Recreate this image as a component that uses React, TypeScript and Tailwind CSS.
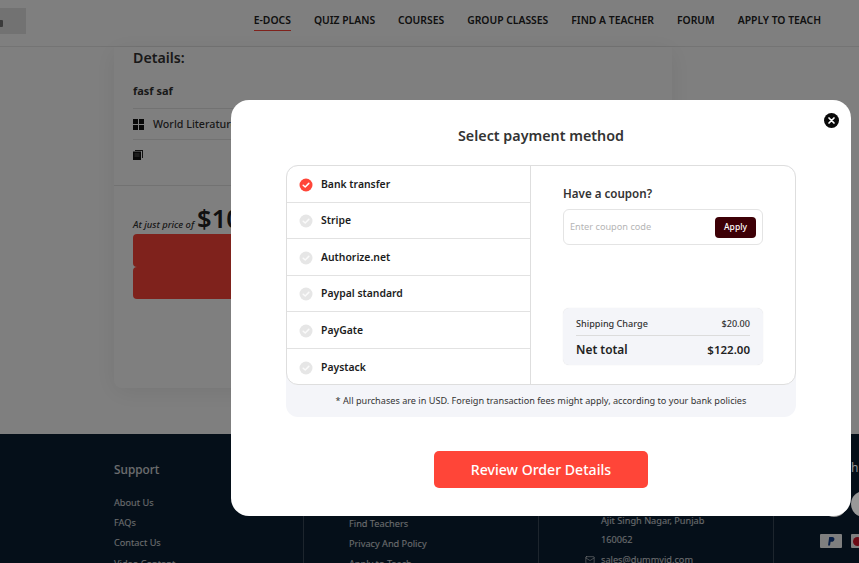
import React from 'react';
import { Mail } from 'lucide-react';

const navItems = ['E-DOCS', 'QUIZ PLANS', 'COURSES', 'GROUP CLASSES', 'FIND A TEACHER', 'FORUM', 'APPLY TO TEACH'];
const methods = ['Bank transfer', 'Stripe', 'Authorize.net', 'Paypal standard', 'PayGate', 'Paystack'];

const CheckDot = ({ active }: { active: boolean }) => (
  <svg width="14" height="14" viewBox="0 0 14 14" className="shrink-0">
    <circle cx="7" cy="7" r="6.5" fill={active ? '#ff4538' : '#e6e6e6'} />
    <path d="M4.2 7.2 6.2 9l3.6-3.6" fill="none" stroke={active ? '#ffffff' : '#fafafa'} strokeWidth="1.5" strokeLinecap="round" strokeLinejoin="round" />
  </svg>
);

const Header = () => (
  <header className="flex h-[47px] items-start justify-between border-b border-[#e8e8e8] bg-white pr-[38px]">
    <div className="mt-2 flex h-[26px] w-[26px] items-center bg-[#e4e4e4]">
      <div className="mt-[4px] h-[7px] w-[3px] rounded-r-[1px] bg-[#777]" />
    </div>
    <nav className="flex gap-[23px] pt-[13px]">
      {navItems.map((item, i) => (
        <div key={item} className={`h-[18px] text-[10.350px] leading-[15px] font-semibold text-[#222] ${i === 0 ? 'border-b border-[#ff4538]' : ''}`}>
          {item}
        </div>
      ))}
    </nav>
  </header>
);

const ProductCard = () => (
  <div className="ml-[114px] h-[341px] w-[558px] rounded-b-lg bg-white shadow-[0_4px_24px_rgba(0,0,0,0.08)]">
    <div className="px-[19px] pt-[1px]">
      <h2 className="text-[14.200px] leading-[20px] font-semibold text-[#333]">Details:</h2>
      <p className="mt-[15px] h-[26px] border-b border-[#e4e4e4] text-[11px] leading-[16px] font-bold text-[#333]">fasf saf</p>
      <div className="flex h-[31px] items-center gap-[9px] border-b border-[#e4e4e4] text-[10.700px] font-medium text-[#333]">
        <svg width="11" height="11" viewBox="0 0 11 11">
          <path d="M0 0h5v5H0zM6 0h5v5H6zM0 6h5v5H0zM6 6h5v5H6z" fill="#111" />
        </svg>
        World Literature
      </div>
      <div className="flex h-[30px] items-center pb-[1px]">
        <svg width="10" height="11" viewBox="0 0 10 11">
          <path d="M2 1h8v8H9V2H2z" fill="#222" />
          <path d="M0 2.500h8V11H0z" fill="#111" />
          <path d="M1.500 5h5M1.500 7h5" stroke="#888" strokeWidth="0.7" />
        </svg>
      </div>
    </div>
    <div className="mt-[15px] border-t border-[#e4e4e4] px-[19px] pt-[19px]">
      <div className="flex h-[29px] items-end">
        <span className="mr-[3px] text-[9.400px] leading-[18px] font-medium text-[#333] italic">At just price of</span>
        <span className="text-[25.500px] leading-[32px] font-semibold text-[#222]">$102.00</span>
      </div>
      <div className="h-[33px] rounded bg-[#ff4538]" />
      <div className="h-[32px] rounded bg-[#ff4538]" />
    </div>
  </div>
);

const Footer = () => (
  <footer className="mt-[46px] flex h-[129px] overflow-hidden bg-[#0b1f33] pl-[114px] text-[9.200px] text-[#fff]/85">
    <div className="w-[189px] shrink-0 pt-[26px]">
      <h3 className="text-[11.800px] leading-[18px] font-medium">Support</h3>
      <div className="mt-[18px] flex flex-col gap-[6.200px] leading-[14px]">
        <span>About Us</span>
        <span>FAQs</span>
        <span>Contact Us</span>
        <span>Video Content</span>
      </div>
    </div>
    <div className="w-[235px] shrink-0 border-l border-[#fff]/20 pt-[83px] pl-[45px]">
      <div className="flex flex-col gap-[6px] leading-[14px]">
        <span>Find Teachers</span>
        <span>Privacy And Policy</span>
        <span>Apply to Teach</span>
      </div>
    </div>
    <div className="w-[235px] shrink-0 border-l border-[#fff]/20 pt-[77px] pl-[46px]">
      <div className="pl-[16px] leading-[19px]">
        <div>Ajit Singh Nagar, Punjab</div>
        <div>160062</div>
      </div>
      <div className="mt-[1px] flex items-center gap-[6px] leading-[19px]">
        <Mail size={10} strokeWidth={1.5} />
        <span>sales@dummvid.com</span>
      </div>
    </div>
    <div className="flex-1 border-l border-[#fff]/20 pt-[100px] pl-[46px]">
      <div className="flex gap-[9px]">
        <div className="flex h-[14px] w-[22px] shrink-0 items-center justify-center rounded-[1px] bg-white">
          <svg width="7" height="9" viewBox="0 0 7 9">
            <path d="M1.200 0h3c1.500 0 2.500 1 2.200 2.400C6.100 4 5 4.800 3.500 4.800H2.600L2 8.600H0z" fill="#123f8c" />
          </svg>
        </div>
        <div className="flex h-[14px] w-[22px] shrink-0 items-center rounded-[1px] bg-white pl-[2px]">
          <div className="h-[9px] w-[9px] rounded-full bg-[#d8152a]" />
        </div>
      </div>
    </div>
  </footer>
);

const PaymentModal = () => (
  <div className="absolute top-[100px] left-[231px] flex h-[416px] w-[620px] flex-col items-center rounded-[18px] bg-white">
    <button className="absolute top-[13px] right-[12px]">
      <svg width="15" height="15" viewBox="0 0 15 15" className="block">
        <circle cx="7.500" cy="7.500" r="7.500" fill="#0a0a0a" />
        <path d="M5 5l5 5M10 5l-5 5" stroke="#fff" strokeWidth="1.700" strokeLinecap="round" />
      </svg>
    </button>
    <h2 className="mt-[25px] text-[14.300px] leading-[21px] font-semibold text-[#333]">Select payment method</h2>
    <div className="mt-[19px] w-[510px] rounded-xl bg-[#f4f5f9]">
      <div className="flex h-[220px] rounded-xl border border-[#dedede] bg-white">
        <div className="w-[244px] shrink-0 border-r border-[#dedede]">
          {methods.map((m, i) => (
            <div key={m} className={`flex h-[36.500px] items-center gap-[8px] pt-[2px] pl-[12px] text-[10.400px] font-semibold text-[#1c1c1c] ${i < methods.length - 1 ? 'border-b border-[#e2e2e2]' : ''}`}>
              <CheckDot active={i === 0} />
              {m}
            </div>
          ))}
        </div>
        <div className="flex flex-1 flex-col px-[32px] pt-[19px]">
          <h3 className="text-[11.600px] leading-[18px] font-semibold text-[#333]">Have a coupon?</h3>
          <div className="mt-[6px] flex h-[36px] items-center justify-between rounded-md border border-[#e4e4e4] pr-[6px] pl-[6px]">
            <span className="text-[9.200px] text-[#b5b5b5]">Enter coupon code</span>
            <button className="h-[21px] w-[41px] rounded bg-[#3d0006] text-[8.500px] font-medium text-white">Apply</button>
          </div>
          <div className="mt-[63px] h-[57px] rounded-md bg-[#f4f5f9] px-[13px] pt-[8px] shadow-[0_0_1px_rgba(0,0,0,0.15)]">
            <div className="flex h-[20px] items-center justify-between border-b border-[#dcdcdc] pb-[3px] text-[9.100px] font-medium text-[#333]">
              <span>Shipping Charge</span>
              <span>$20.00</span>
            </div>
            <div className="flex h-[28px] items-center justify-between text-[11.900px] font-semibold text-[#222]">
              <span>Net total</span>
              <span className="text-[11.500px]">$122.00</span>
            </div>
          </div>
        </div>
      </div>
      <p className="flex h-[32px] items-center justify-center text-[9.150px] text-[#333]">
        * All purchases are in USD. Foreign transaction fees might apply, according to your bank policies
      </p>
    </div>
    <button className="mt-[34px] h-[37px] w-[214px] rounded-[5px] bg-[#ff4538] text-[14.100px] font-medium text-white">
      Review Order Details
    </button>
  </div>
);

export default function App() {
  return (
    <div className="relative h-[563px] w-[859px] overflow-hidden bg-white font-['Noto_Sans','Open_Sans',sans-serif]">
      <Header />
      <ProductCard />
      <Footer />
      <div className="absolute inset-0 bg-black/50" />
      <div className="absolute top-[491px] left-[821px] h-[26px] w-[26px] rounded-full bg-[#999]" />
      <div className="absolute top-[491px] left-[851px] h-[26px] w-[26px] rounded-full bg-[#999]" />
      <div className="absolute top-[459px] left-[851px] text-[12px] leading-[18px] text-[#999]">h</div>
      <PaymentModal />
    </div>
  );
}
